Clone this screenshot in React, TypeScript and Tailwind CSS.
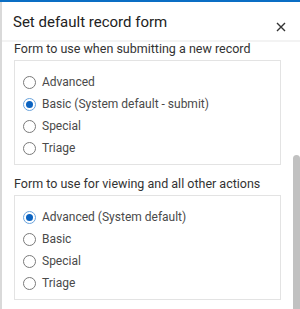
import React from "react";

const FONT = { fontFamily: "Roboto, 'Noto Sans', sans-serif" };

function Radio({ label, checked }: { label: string; checked?: boolean }) {
  return (
    <div className="flex items-center h-[22px]">
      {checked ? (
        <span className="w-[13px] h-[13px] rounded-full border border-[#6aa3dc] flex items-center justify-center shrink-0">
          <span className="w-[7px] h-[7px] rounded-full bg-[#0b63c1]" />
        </span>
      ) : (
        <span className="w-[13px] h-[13px] rounded-full border border-[#7a7a7a] shrink-0" />
      )}
      <span className="ml-[6px] text-[12px] leading-[16px] text-[#4a4a4a]">{label}</span>
    </div>
  );
}

function Section({ title, options, selected, top }: { title: string; options: string[]; selected: number; top?: boolean }) {
  return (
    <div className={top ? "" : "mt-[10px]"}>
      <div className="h-[18px] flex items-center text-[12.5px] text-[#333]">{title}</div>
      <div className="mt-[2px] w-[267px] border border-[#e3e3e3] pl-[8px] pt-[10px] pb-[5px]">
        {options.map((o, i) => (
          <Radio key={o} label={o} checked={i === selected} />
        ))}
      </div>
    </div>
  );
}

export default function App() {
  return (
    <div className="w-[300px] h-[309px] bg-white overflow-hidden flex flex-col border-t-2 border-[#0a6ec4]" style={FONT}>
      <div className="flex-1 flex flex-col border-l-2 border-[#d9d9d9]">
        {/* Header */}
        <div className="h-[38px] flex items-start justify-between pl-[11px] pr-[14px] shrink-0">
          <h1 className="mt-[11px] text-[15px] leading-[18px] text-[#222]">Set default record form</h1>
          <svg className="mt-[20px]" width="10" height="10" viewBox="0 0 10 10" fill="none">
            <path d="M1 1L9 9M9 1L1 9" stroke="#333" strokeWidth="1.4" />
          </svg>
        </div>
        <div className="h-[2px] bg-[#f3f3f3] shrink-0" />

        {/* Body */}
        <div className="relative flex-1 pl-[12px] -mt-[2px]">
          <Section
            top
            title="Form to use when submitting a new record"
            options={["Advanced", "Basic (System default - submit)", "Special", "Triage"]}
            selected={1}
          />
          <Section
            title="Form to use for viewing and all other actions"
            options={["Advanced (System default)", "Basic", "Special", "Triage"]}
            selected={0}
          />
          <div className="absolute right-0 top-[115px] bottom-0 w-[7px] rounded-t-[4px] bg-[#c1c1c1]" />
        </div>
      </div>
    </div>
  );
}
